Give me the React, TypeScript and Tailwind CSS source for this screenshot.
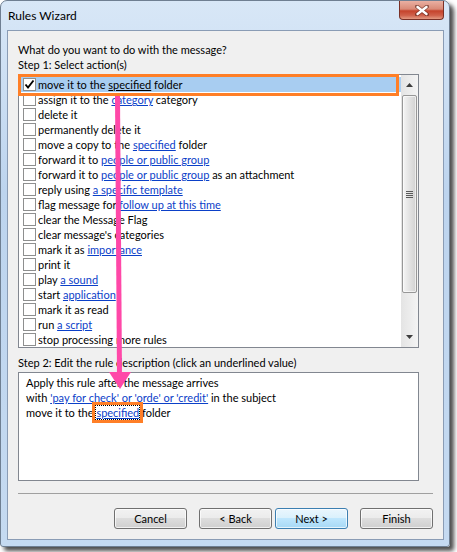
import React from 'react';

type Part = string | { link: string };

const L = (link: string) => ({ link });

const actions: Part[][] = [
  ['move it to the ', L('specified'), ' folder'],
  ['assign it to the ', L('category'), ' category'],
  ['delete it'],
  ['permanently delete it'],
  ['move a copy to the ', L('specified'), ' folder'],
  ['forward it to ', L('people or public group')],
  ['forward it to ', L('people or public group'), ' as an attachment'],
  ['reply using ', L('a specific template')],
  ['flag message for ', L('follow up at this time')],
  ['clear the Message Flag'],
  ["clear message's categories"],
  ['mark it as ', L('importance')],
  ['print it'],
  ['play ', L('a sound')],
  ['start ', L('application')],
  ['mark it as read'],
  ['run ', L('a script')],
  ['stop processing more rules'],
];

function Checkbox({ checked }: { checked?: boolean }) {
  return (
    <span className="w-[13px] h-[13px] shrink-0 border border-[#8e8f8f] bg-white flex items-center justify-center">
      {checked && (
        <svg width="11" height="11" viewBox="0 0 11 11">
          <path d="M1.5 5.5 L4 8.5 L9.5 1.5" fill="none" stroke="#000" strokeWidth="1.9" />
        </svg>
      )}
    </span>
  );
}

function Scrollbar() {
  return (
    <div className="w-[17px] shrink-0 flex flex-col bg-[linear-gradient(to_right,#e4e4e4,#f4f4f4)]">
      <div className="h-[20px] flex items-center justify-center">
        <svg width="7" height="4" viewBox="0 0 7 4">
          <path d="M0 4 L3.5 0 L7 4 Z" fill="#3d3d3d" />
        </svg>
      </div>
      <div className="mx-[1px] h-[198px] rounded-[2px] border border-[#979797] bg-[linear-gradient(to_right,#f5f5f5,#e4e4e4_45%,#d2d2d2)] shadow-[inset_0_0_0_1px_rgba(255,255,255,0.6)] flex flex-col items-center justify-center gap-[1px]">
        {[0, 1, 2, 3].map((i) => (
          <div key={i} className="w-[7px] h-px bg-[#5a5a5a]" />
        ))}
      </div>
      <div className="flex-1" />
      <div className="h-[20px] flex items-center justify-center">
        <svg width="7" height="4" viewBox="0 0 7 4">
          <path d="M0 0 L3.5 4 L7 0 Z" fill="#3d3d3d" />
        </svg>
      </div>
    </div>
  );
}

function Button({ label, primary }: { label: string; primary?: boolean }) {
  return (
    <div
      className={
        primary
          ? 'w-[73px] h-[21px] rounded-[3px] border border-[#3c7fb1] bg-[linear-gradient(to_bottom,#eaf6fd_0%,#d9f0fc_50%,#bee6fd_50%,#a7d9f5_100%)] shadow-[inset_0_0_0_1px_rgba(255,255,255,0.7)] flex items-center justify-center'
          : 'w-[73px] h-[21px] rounded-[3px] border border-[#707070] bg-[linear-gradient(to_bottom,#f2f2f2_0%,#ebebeb_50%,#dddddd_50%,#cfcfcf_100%)] shadow-[inset_0_0_0_1px_rgba(255,255,255,0.7)] flex items-center justify-center'
      }
    >
      {label}
    </div>
  );
}

export default function App() {
  return (
    <div className="relative w-[457px] h-[552px] bg-white overflow-hidden font-['Lato',sans-serif] text-[11px] text-black leading-[15px]">
      {/* Window frame */}
      <div className="w-[450px] h-[547px] rounded-t-[7px] rounded-b-[3px] border border-[#6f7f92] bg-[linear-gradient(to_bottom,#d8e7f7,#bdd4ee_35%,#c5daf1)] pl-[6px] pr-[5px] pb-[6px] flex flex-col shadow-[4px_4px_4px_rgba(0,0,0,0.7)]">
        {/* Title bar */}
        <div className="h-[29px] flex justify-between items-start shrink-0">
          <span className="pl-[1px] pt-[7px] text-[12px]">Rules Wizard</span>
          <div className="w-[45px] h-[19px] rounded-b-[4px] border border-t-0 border-[#7a3026] bg-[linear-gradient(to_bottom,#eab0a2_0%,#d98a77_45%,#c5432c_55%,#d0614b_80%,#e39a82_100%)] flex items-center justify-center">
            <svg width="14" height="11" viewBox="0 0 14 11">
              <path d="M2 1.5 L12 9.5 M12 1.5 L2 9.5" stroke="#4a1a12" strokeWidth="4" strokeLinecap="round" opacity="0.55" />
              <path d="M2.5 2 L11.5 9 M11.5 2 L2.5 9" stroke="#fff" strokeWidth="2.4" strokeLinecap="round" />
            </svg>
          </div>
        </div>

        {/* Client area */}
        <div className="flex-1 bg-[#f0f0f0] border border-[#8a9cb5] px-[10px] pt-[11px] flex flex-col">
          <div>What do you want to do with the message?</div>
          <div>Step 1: Select action(s)</div>

          <div className="mt-[2px] w-[401px] h-[274px] border border-[#828790] bg-white flex">
            <div className="flex-1 pt-[2px] overflow-hidden">
              {actions.map((parts, i) => (
                <div
                  key={i}
                  className={
                    i === 0
                      ? 'h-[15px] flex items-center gap-[2px] pl-[3px] ml-[1px] bg-[#a8cdf1] whitespace-nowrap'
                      : 'h-[15px] flex items-center gap-[2px] pl-[3px] ml-[1px] whitespace-nowrap'
                  }
                >
                  <Checkbox checked={i === 0} />
                  <span>
                    {parts.map((p, j) =>
                      typeof p === 'string' ? (
                        <span key={j}>{p}</span>
                      ) : (
                        <span key={j} className={i === 0 ? 'underline' : 'underline text-[#0b40c8]'}>
                          {p.link}
                        </span>
                      )
                    )}
                  </span>
                </div>
              ))}
            </div>
            <Scrollbar />
          </div>

          <div className="mt-[7px]">Step 2: Edit the rule description (click an underlined value)</div>
          <div className="mt-[2px] w-[401px] h-[109px] border border-[#828790] bg-white pl-[7px] pt-[2px]">
            <div>Apply this rule after the message arrives</div>
            <div>
              with <span className="underline text-[#0b40c8]">'pay for check' or 'orde' or 'credit'</span> in the subject
            </div>
            <div>
              move it to the{' '}
              <span className="underline text-[#0b40c8] outline-1 outline-dotted outline-black">specified</span> folder
            </div>
          </div>

          <div className="mt-[12px] h-px bg-[#a0a0a0]" />

          <div className="mt-[14px] flex justify-end">
            <Button label="Cancel" />
            <div className="w-[12px]" />
            <Button label="< Back" />
            <div className="w-[3px]" />
            <Button label="Next >" primary />
            <div className="w-[12px]" />
            <Button label="Finish" />
          </div>
        </div>
      </div>

      {/* Annotations */}
      <div className="absolute left-[18px] top-[74px] w-[381px] h-[22px] border-[3px] border-[#ff7f27]" />
      <div className="absolute left-[92px] top-[402px] w-[51px] h-[21px] border-[3px] border-[#ff7f27]" />
      <svg className="absolute left-0 top-0 pointer-events-none" width="457" height="552" viewBox="0 0 457 552">
        <line x1="117.5" y1="96" x2="119.5" y2="375" stroke="#ff48a8" strokeWidth="5" />
        <path d="M109 372 L131 372 L120 389 Z" fill="#ff48a8" />
      </svg>
    </div>
  );
}
